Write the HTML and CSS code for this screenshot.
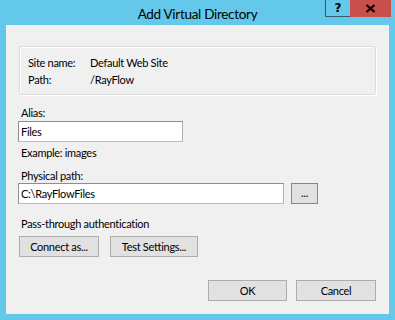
FILE: index.html
```html
<!DOCTYPE html>
<html>
<head>
<meta charset="utf-8">
<link rel="stylesheet" href="styles.css">
</head>
<body>
<div class="window">
  <div class="titlebar">
    <div class="tb-left"></div>
    <div class="title">Add Virtual Directory</div>
    <div class="caption">
      <div class="cap-help">?</div>
      <div class="cap-close"><svg width="11" height="9" viewBox="0 0 11 9"><path d="M1.5 1 L9.5 8 M9.5 1 L1.5 8" stroke="#000" stroke-width="2.2" fill="none"/></svg></div>
    </div>
  </div>
  <div class="client">
    <div class="group">
      <div class="info-row"><span class="info-key">Site name:</span><span>Default Web Site</span></div>
      <div class="info-row"><span class="info-key">Path:</span><span>/RayFlow</span></div>
    </div>
    <div class="label alias-label">Alias:</div>
    <div class="textbox alias-box">Files</div>
    <div class="label example">Example: images</div>
    <div class="label phys-label">Physical path:</div>
    <div class="path-row">
      <div class="textbox path-box">C:\RayFlowFiles</div>
      <div class="btn browse">...</div>
    </div>
    <div class="label pass-label">Pass-through authentication</div>
    <div class="auth-row">
      <div class="btn connect">Connect as...</div>
      <div class="btn test">Test Settings...</div>
    </div>
    <div class="footer">
      <div class="btn ok">OK</div>
      <div class="btn cancel">Cancel</div>
    </div>
  </div>
</div>
</body>
</html>
```

FILE: styles.css
```css
html, body {
  margin: 0;
  padding: 0;
}
body {
  background: #63c8ea;
  width: 395px;
  height: 320px;
  overflow: hidden;
  font-family: Lato, "Noto Sans", sans-serif;
  font-size: 11px;
  letter-spacing: -0.3px;
  color: #000;
}
.window {
  width: 395px;
  height: 320px;
  display: flex;
  flex-direction: column;
}
.titlebar {
  height: 25px;
  display: grid;
  grid-template-columns: 1fr auto 1fr;
  align-items: start;
}
.title {
  font-size: 13.5px;
  letter-spacing: -0.3px;
  line-height: 18px;
  padding-top: 5px;
  color: #000;
}
.caption {
  justify-self: end;
  display: flex;
  margin-right: 4px;
}
.cap-help {
  height: 17px;
  border: 1px solid #2f5e70;
  border-top: none;
  border-right: none;
  box-sizing: border-box;
  width: 25px;
  text-align: center;
  font-weight: bold;
  font-size: 12px;
  letter-spacing: 0;
  line-height: 16px;
  font-family: "DejaVu Sans", sans-serif;
}
.cap-close {
  width: 41px;
  height: 17px;
  background: #c7504a;
  display: flex;
  align-items: center;
  justify-content: center;
}
.client {
  flex: 1;
  margin: 0 6px 6px 6px;
  background: #f0f0f0;
  padding: 21px 13px 0 12px;
  display: flex;
  flex-direction: column;
}
.group {
  height: 49px;
  box-sizing: border-box;
  width: 357px;
  margin-left: 1px;
  border: 1px solid #dcdcdc;
  border-radius: 3px;
  box-shadow: inset 1px 1px 0 #fff, 1px 1px 0 #fff;
  padding: 7px 0 0 8px;
}
.info-row {
  display: flex;
  line-height: 17px;
}
.info-key {
  width: 62px;
}
.label {
  line-height: 15px;
  padding-left: 3px;
}
.alias-label {
  margin-top: 10px;
}
.textbox {
  height: 21px;
  box-sizing: border-box;
  background: #fff;
  border: 1px solid #8e8e8e;
  border-bottom-color: #bcbcbc;
  border-right-color: #b0b0b0;
  line-height: 19px;
  padding-left: 2px;
}
.alias-box {
  width: 165px;
  margin-top: 1px;
}
.example {
  margin-top: 3px;
}
.phys-label {
  margin-top: 8px;
}
.path-row {
  display: flex;
  gap: 7px;
  align-items: center;
}
.path-box {
  width: 266px;
}
.btn {
  height: 21px;
  box-sizing: border-box;
  background: #e1e1e1;
  border: 1px solid #adadad;
  text-align: center;
  line-height: 19px;
}
.browse {
  width: 27px;
  border: 1px solid #5593cf;
  line-height: 17px;
}
.pass-label {
  margin-top: 12px;
}
.auth-row {
  display: flex;
  gap: 11px;
  margin-top: 5px;
  padding-left: 1px;
}
.connect {
  width: 80px;
}
.test {
  width: 88px;
}
.footer {
  display: flex;
  justify-content: flex-end;
  gap: 9px;
  margin-top: 23px;
}
.ok {
  width: 79px;
}
.cancel {
  width: 80px;
}
```
